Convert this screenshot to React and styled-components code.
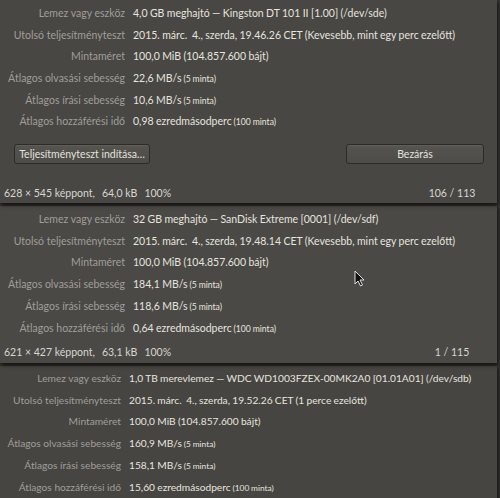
import React from 'react'
import styled, { createGlobalStyle } from 'styled-components'

const GlobalStyle = createGlobalStyle`
  html, body {
    margin: 0;
    padding: 0;
    background: #383735;
  }
  body {
    font-family: Lato, 'Open Sans', sans-serif;
  }
`

const Page = styled.div`
  position: relative;
  width: 500px;
  height: 498px;
  overflow: hidden;
  background: #353432;
  display: flex;
  flex-direction: column;
`

const Window = styled.section`
  position: relative;
  flex: none;
  width: 497px;
  height: ${props => props.$height}px;
  margin-top: ${props => props.$gap}px;
  padding-top: ${props => props.$padTop}px;
  box-sizing: border-box;
  background: ${props => props.$bg};
  box-shadow: 1px 2px 4px rgba(0, 0, 0, 0.7);
  z-index: ${props => props.$z};
  display: flex;
  flex-direction: column;
  font-size: ${props => props.$fontSize}px;
`

const InfoGrid = styled.dl`
  margin: 0;
  display: grid;
  grid-template-columns: ${props => props.$labelWidth}px 1fr;
  grid-auto-rows: ${props => props.$rowHeight}px;
  column-gap: 8px;
  align-items: center;
`

const Label = styled.dt`
  text-align: right;
  color: #a09e99;
  white-space: nowrap;
`

const Value = styled.dd`
  margin: 0;
  color: #e6e4df;
  white-space: pre;
  word-spacing: -0.3px;
`

const Small = styled.small`
  font-size: 0.82em;
`

const ButtonRow = styled.div`
  display: flex;
  justify-content: space-between;
  padding: 0 13px 0 14px;
  margin-top: 12px;
`

const Button = styled.button`
  width: ${props => props.$width}px;
  height: 20px;
  padding: 0;
  border: 1px solid #2c2b29;
  border-radius: 3px;
  background: linear-gradient(#55544f, #4d4c49);
  box-shadow: inset 0 1px 0 rgba(255, 255, 255, 0.06);
  color: #e4e2dd;
  font-family: inherit;
  font-size: inherit;
  white-space: nowrap;
  text-align: center;
`

const StatusBar = styled.footer`
  margin-top: auto;
  height: ${props => props.$height}px;
  display: flex;
  align-items: center;
  padding-left: 4px;
  padding-right: 15px;
  color: #d8d6d1;
`

const StatusInfo = styled.div`
  display: flex;
  gap: 7px;
  flex: 1;
`

const Counter = styled.span`
  width: 60px;
  text-align: center;
`

const Cursor = styled.svg`
  position: absolute;
  left: 354px;
  top: 64px;
`

const panels = [
  {
    key: 'sde',
    height: 203,
    gap: 0,
    padTop: 2,
    bg: '#484744',
    fontSize: 10.5,
    labelWidth: 125,
    rowHeight: 21.7,
    rows: [
      ['Lemez vagy eszköz', '4,0 GB meghajtó — Kingston DT 101 II [1.00] (/dev/sde)'],
      ['Utolsó teljesítményteszt', '2015. márc.  4., szerda, 19.46.26 CET (Kevesebb, mint egy perc ezelőtt)'],
      ['Mintaméret', '100,0 MiB (104.857.600 bájt)'],
      ['Átlagos olvasási sebesség', '22,6 MB/s', '(5 minta)'],
      ['Átlagos írási sebesség', '10,6 MB/s', '(5 minta)'],
      ['Átlagos hozzáférési idő', '0,98 ezredmásodperc', '(100 minta)'],
    ],
    buttons: true,
    status: ['628 × 545 képpont,', '64,0 kB', '100%'],
    counter: '106 / 113',
    statusHeight: 21,
  },
  {
    key: 'sdf',
    height: 157,
    gap: 3,
    padTop: 2,
    bg: '#4a4946',
    fontSize: 10.5,
    labelWidth: 125,
    rowHeight: 21.8,
    rows: [
      ['Lemez vagy eszköz', '32 GB meghajtó — SanDisk Extreme [0001] (/dev/sdf)'],
      ['Utolsó teljesítményteszt', '2015. márc.  4., szerda, 19.48.14 CET (Kevesebb, mint egy perc ezelőtt)'],
      ['Mintaméret', '100,0 MiB (104.857.600 bájt)'],
      ['Átlagos olvasási sebesség', '184,1 MB/s', '(5 minta)'],
      ['Átlagos írási sebesség', '118,6 MB/s', '(5 minta)'],
      ['Átlagos hozzáférési idő', '0,64 ezredmásodperc', '(100 minta)'],
    ],
    cursor: true,
    status: ['621 × 427 képpont,', '63,1 kB', '100%'],
    counter: '1 / 115',
    statusHeight: 22,
  },
  {
    key: 'sdb',
    height: 140,
    gap: 3,
    padTop: 1,
    bg: '#464542',
    fontSize: 10.2,
    labelWidth: 121,
    rowHeight: 21.8,
    rows: [
      ['Lemez vagy eszköz', '1,0 TB merevlemez — WDC WD1003FZEX-00MK2A0 [01.01A01] (/dev/sdb)'],
      ['Utolsó teljesítményteszt', '2015. márc.  4., szerda, 19.52.26 CET (1 perce ezelőtt)'],
      ['Mintaméret', '100,0 MiB (104.857.600 bájt)'],
      ['Átlagos olvasási sebesség', '160,9 MB/s', '(5 minta)'],
      ['Átlagos írási sebesség', '158,1 MB/s', '(5 minta)'],
      ['Átlagos hozzáférési idő', '15,60 ezredmásodperc', '(100 minta)'],
    ],
  },
]

const BenchmarkWindow = ({ panel, z }) => (
  <Window
    $height={panel.height}
    $gap={panel.gap}
    $padTop={panel.padTop}
    $bg={panel.bg}
    $fontSize={panel.fontSize}
    $z={z}
  >
    <InfoGrid $labelWidth={panel.labelWidth} $rowHeight={panel.rowHeight}>
      {panel.rows.map(([label, value, note]) => (
        <React.Fragment key={label}>
          <Label>{label}</Label>
          <Value>
            {value}
            {note && <Small> {note}</Small>}
          </Value>
        </React.Fragment>
      ))}
    </InfoGrid>
    {panel.buttons && (
      <ButtonRow>
        <Button $width={136}>Teljesítményteszt indítása…</Button>
        <Button $width={138}>Bezárás</Button>
      </ButtonRow>
    )}
    {panel.status && (
      <StatusBar $height={panel.statusHeight}>
        <StatusInfo>
          {panel.status.map(part => (
            <span key={part}>{part}</span>
          ))}
        </StatusInfo>
        <Counter>{panel.counter}</Counter>
      </StatusBar>
    )}
    {panel.cursor && (
      <Cursor width="11" height="17" viewBox="0 0 11 17">
        <path
          d="M1 1 L1 14 L4 11 L6.5 16 L8.5 15 L6 10 L10 10 Z"
          fill="#111"
          stroke="#ddd"
          strokeWidth="1"
          strokeLinejoin="round"
        />
      </Cursor>
    )}
  </Window>
)

const App = () => (
  <>
    <GlobalStyle />
    <Page>
      {panels.map((panel, i) => (
        <BenchmarkWindow key={panel.key} panel={panel} z={3 - i} />
      ))}
    </Page>
  </>
)

export default App
